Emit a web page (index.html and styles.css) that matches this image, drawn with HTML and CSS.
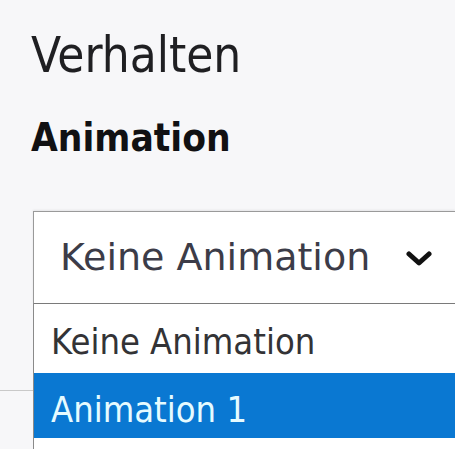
FILE: index.html
```html
<!DOCTYPE html>
<html lang="de">
<head>
<meta charset="utf-8">
<title>Verhalten</title>
<link rel="stylesheet" href="styles.css">
</head>
<body>
<div class="panel">
  <h1 class="title">Verhalten</h1>
  <h2 class="label">Animation</h2>
  <div class="field">
    <div class="select">
      <span class="value">Keine Animation</span>
      <svg class="chevron" width="26" height="16" viewBox="0 0 26 16"><polyline points="3,3 13,12 23,3" fill="none" stroke="#111" stroke-width="5" stroke-linecap="round" stroke-linejoin="round"/></svg>
    </div>
    <ul class="menu">
      <li class="option first">Keine Animation</li>
      <li class="option active">Animation 1</li>
      <li class="option rest"></li>
    </ul>
  </div>
  <div class="divider"></div>
</div>
</body>
</html>
```

FILE: styles.css
```css
html, body {
  margin: 0;
  padding: 0;
  height: 100%;
  overflow: hidden;
}
body {
  background: #f7f7f9;
  font-family: "DejaVu Sans", Verdana, sans-serif;
}
.panel {
  padding: 31px 0 0 31px;
}
.title {
  margin: 0;
  font-family: "DejaVu Sans Condensed", "DejaVu Sans", sans-serif;
  font-stretch: condensed;
  font-weight: normal;
  font-size: 49px;
  line-height: 49px;
  color: #1f1f22;
}
.label {
  margin: 39px 0 0;
  font-family: "DejaVu Sans Condensed", "DejaVu Sans", sans-serif;
  font-stretch: condensed;
  font-weight: bold;
  font-size: 38.5px;
  line-height: 38px;
  color: #111113;
}
.field {
  position: relative;
  margin: 54px 0 0 2px;
}
.select {
  display: flex;
  align-items: center;
  background: #fff;
  border: 1px solid #9a9a9a;
  border-right: none;
  border-bottom-color: #7a7a7a;
  padding: 23px 0 24px 26px;
  box-shadow: 0 -1px 2px rgba(0,0,0,0.08);
}
.value {
  font-size: 38px;
  line-height: 44px;
  color: #3c3c48;
}
.chevron {
  margin-left: 36px;
  margin-top: 3px;
}
.menu {
  position: absolute;
  left: 0;
  right: 0;
  top: 100%;
  margin: 0;
  padding: 0;
  list-style: none;
  background: #fff;
  border-left: 1px solid #8a8a8a;
  z-index: 2;
}
.option {
  font-family: "DejaVu Sans Condensed", "DejaVu Sans", sans-serif;
  font-stretch: condensed;
  font-size: 36px;
  line-height: 41px;
  color: #333336;
  padding: 0 0 0 17px;
}
.option.first {
  padding-top: 17px;
  padding-bottom: 11px;
}
.option.active {
  background: #0a78d2;
  color: #e6fbff;
  padding-top: 16px;
  padding-bottom: 8px;
}
.option.rest {
  height: 11px;
}
.divider {
  margin-top: 86px;
  margin-left: -31px;
  border-top: 1px solid #c9c9c9;
}
```
